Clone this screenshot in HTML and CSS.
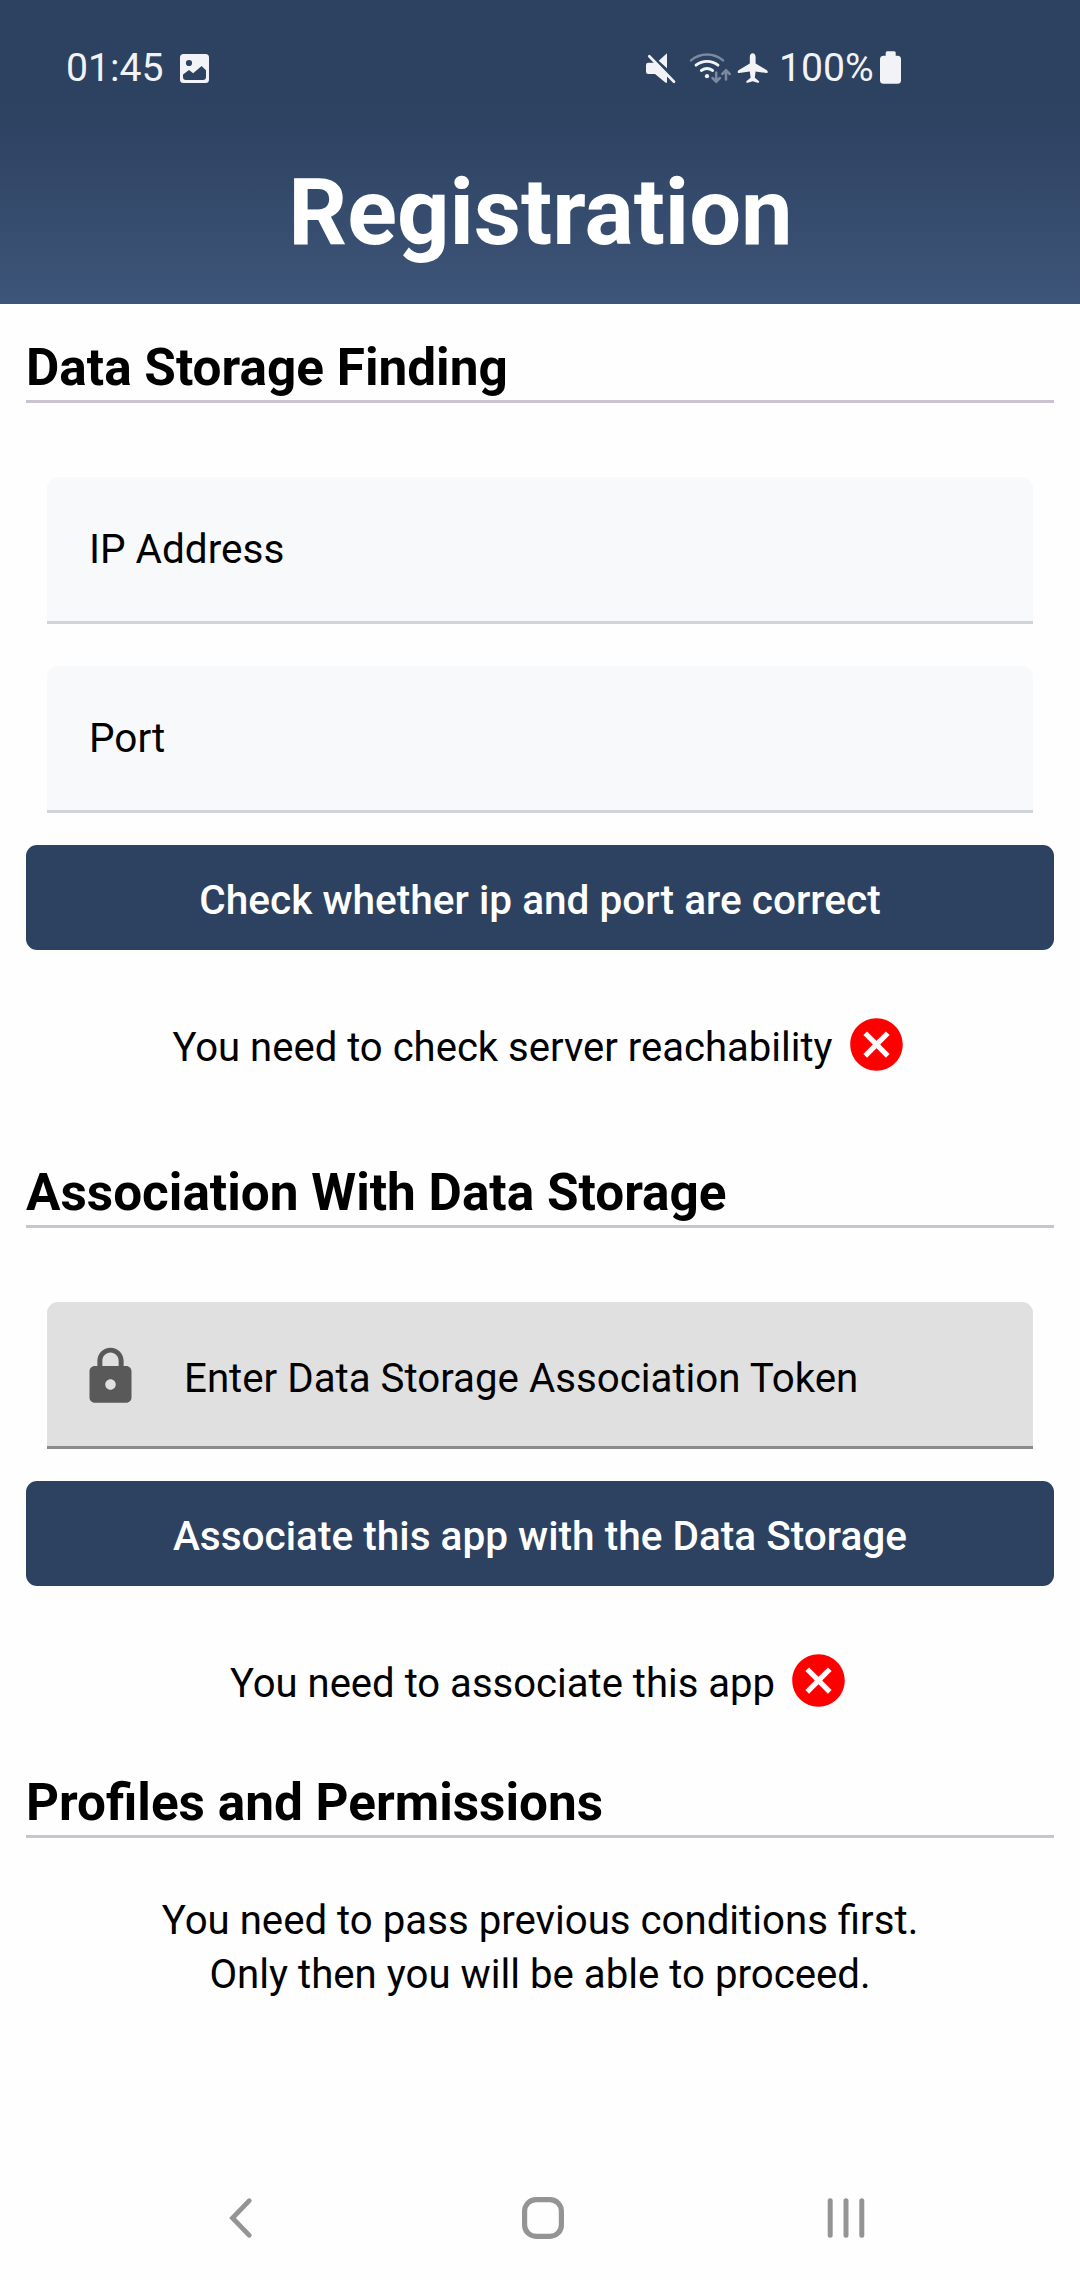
FILE: index.html
```html
<!DOCTYPE html>
<html lang="en">
<head>
<meta charset="utf-8">
<title>Registration</title>
<link rel="stylesheet" href="styles.css">
</head>
<body>
<header class="header">
  <div class="statusbar">
    <div class="status-left">
      <span>01:45</span>
      <svg width="29" height="29" viewBox="0 0 29 29"><rect width="29" height="29" rx="3.5" fill="#f1f3f6"/><circle cx="9" cy="9" r="3.1" fill="#2d4160"/><path d="M3 20.5L9 16l4.2 3.2 8.4-7.2 4.4 4.2V23q0 3-3 3H6q-3 0-3-3z" fill="#2d4160"/></svg>
    </div>
    <div class="status-right">
      <svg width="34" height="36" viewBox="0 0 34 36" fill="#f1f3f6"><path d="M23 3.3v15L14.7 10.7zM2 15q0-2.3 2.3-2.3H11l12 12v7.8q-.7.7-2-.3L11 24H4.300q-2.300 0-2.300-2.300z"/><path d="M5.300 6.300L30 31.700" stroke="#f1f3f6" stroke-width="2.700" stroke-linecap="round"/></svg>
      <svg class="wifi" width="46" height="36" viewBox="0 0 46 36" fill="none" stroke="#f1f3f6" stroke-width="2.800" stroke-linecap="round"><path d="M3 10.400a25 25 0 0 1 32 0M38 29.500v-9m-3.700 3.500l3.700-3.700 3.700 3.700M28.200 22.500v9m-3.700-3.500l3.700 3.700 3.700-3.700" stroke="#7c899e" stroke-width="2.500"/><path d="M8 15.200a17.500 17.500 0 0 1 22 0M13.300 20.500a10 10 0 0 1 11.400 0"/><circle cx="19" cy="26.200" r="2.100" fill="#f1f3f6" stroke="none"/></svg>
      <svg width="36" height="36" viewBox="0 0 36 36" fill="#f1f3f6"><path d="M17.700 3.300c-1.700 0-2.900 1.500-2.900 3.700v6.500L3.500 20.300c-1.300.9-1.100 3.200.7 2.700l10.600-1.600.8 6.300-4 3.200c-1 1 0 2.200 1.200 1.900l4.900-1.600 4.900 1.600c1.200.3 2.200-.9 1.200-1.900l-4-3.200.8-6.300L31.200 23c1.800.5 2-1.800.7-2.700L20.600 13.500V7c0-2.200-1.200-3.700-2.900-3.700z"/></svg>
      <span class="percent">100%</span>
      <svg width="21" height="36" viewBox="0 0 21 36" fill="#f1f3f6"><rect y="5.700" width="21" height="28" rx="3.500"/><rect x="5.700" y="1.300" width="10" height="8" rx="1.500"/></svg>
    </div>
  </div>
  <h1 class="title">Registration</h1>
</header>

<main class="content">
  <section class="section">
    <h2 class="heading">Data Storage Finding</h2>
    <div class="fields">
      <div class="field">IP Address</div>
      <div class="field">Port</div>
    </div>
    <button class="button">Check whether ip and port are correct</button>
    <div class="result">
      <span>You need to check server reachability</span>
      <svg width="63" height="63" viewBox="0 0 24 24" fill="#f00"><path d="M12 2C6.470 2 2 6.470 2 12s4.470 10 10 10 10-4.470 10-10S17.530 2 12 2zm5 13.590L15.590 17 12 13.410 8.410 17 7 15.590 10.590 12 7 8.410 8.410 7 12 10.590 15.590 7 17 8.410 13.410 12z"/></svg>
    </div>
  </section>

  <section class="section association">
    <h2 class="heading">Association With Data Storage</h2>
    <div class="fields">
      <div class="field disabled">
        <svg width="63" height="63" viewBox="0 0 24 24" fill="#595959"><path d="M18 8h-1V6c0-2.760-2.240-5-5-5S7 3.240 7 6v2H6c-1.100 0-2 .9-2 2v10c0 1.100.9 2 2 2h12c1.100 0 2-.9 2-2V10c0-1.100-.9-2-2-2zm-6 9c-1.100 0-2-.9-2-2s.9-2 2-2 2 .9 2 2-.9 2-2 2zm3.100-9H8.900V6c0-1.710 1.390-3.100 3.100-3.100s3.100 1.390 3.100 3.100z"/></svg>
        <span>Enter Data Storage Association Token</span>
      </div>
    </div>
    <button class="button">Associate this app with the Data Storage</button>
    <div class="result">
      <span>You need to associate this app</span>
      <svg width="63" height="63" viewBox="0 0 24 24" fill="#f00"><path d="M12 2C6.470 2 2 6.470 2 12s4.470 10 10 10 10-4.470 10-10S17.530 2 12 2zm5 13.590L15.590 17 12 13.410 8.410 17 7 15.590 10.590 12 7 8.410 8.410 7 12 10.590 15.590 7 17 8.410 13.410 12z"/></svg>
    </div>
  </section>

  <section class="section permissions">
    <h2 class="heading">Profiles and Permissions</h2>
    <p class="note">You need to pass previous conditions first.<br>Only then you will be able to proceed.</p>
  </section>
</main>

<nav class="navbar">
  <svg width="30" height="44" viewBox="0 0 30 44"><path d="M24.300 4.700L7.500 22l16.800 17.300" fill="none" stroke="#949494" stroke-width="4.800" stroke-linecap="round"/></svg>
  <svg class="home" width="42" height="42" viewBox="0 0 42 42"><rect x="2.600" y="2.600" width="36.800" height="36.800" rx="11.500" fill="none" stroke="#949494" stroke-width="5.200"/></svg>
  <svg width="38" height="40" viewBox="0 0 38 40"><path d="M3.200 2.700v34.600M19 2.700v34.600M34.800 2.700v34.600" stroke="#949494" stroke-width="5" stroke-linecap="round"/></svg>
</nav>
</body>
</html>
```
FILE: styles.css
```css
* { box-sizing: border-box; }

body {
  margin: 0;
  width: 1080px;
  height: 2280px;
  display: flex;
  flex-direction: column;
  background: #fefefe;
  color: #000;
  font: 40.2px/54px Roboto, "Noto Sans", sans-serif;
  overflow: hidden;
}

svg { display: block; flex: none; }

/* Header */
.header {
  height: 304px;
  background: linear-gradient(#2d4160 105px, #3d5579 304px);
  color: #fff;
}

.statusbar {
  display: flex;
  justify-content: space-between;
  height: 136px;
  padding: 0 179px 0 66px;
  color: #f1f3f6;
  font-size: 39.2px;
}

.status-left,
.status-right {
  display: flex;
  align-items: center;
  height: 136px;
}

.status-left { gap: 16px; }
.wifi { margin: 0 1px 0 10px; }
.percent { width: 109px; padding-left: 8px; }

.title {
  margin: 22px 0 0;
  padding-left: 1px;
  font-size: 92px;
  line-height: 110px;
  font-weight: 700;
  text-align: center;
}

/* Form */
.content {
  flex: 1;
  padding: 34px 26px 0;
}

.association { margin-top: 87px; }
.permissions { margin-top: 61px; }

.heading {
  margin: 0;
  padding-bottom: 2px;
  border-bottom: 3px solid #cac4d0;
  font-size: 51.3px;
  line-height: 60px;
  font-weight: 700;
}

.fields {
  display: flex;
  flex-direction: column;
  gap: 42px;
  padding: 74px 21px 32px;
}

.field {
  display: flex;
  align-items: center;
  height: 147px;
  padding: 0 42px;
  background: #f8f9fb;
  border-bottom: 3px solid #d0d4d9;
  border-radius: 11px 11px 0 0;
  font-size: 40.5px;
}

.disabled {
  gap: 42px;
  padding: 5px 32px 0;
  background: #e0e0e0;
  border-color: #8b8b8b;
  font-size: 40.25px;
}

.disabled span { padding-top: 4px; }

.button {
  display: block;
  width: 100%;
  height: 105px;
  padding: 5px 0 0;
  border: 0;
  border-radius: 11px;
  background: #2d4160;
  color: #fff;
  font: 500 40.55px/54px Roboto, "Noto Sans", sans-serif;
}

.result {
  display: flex;
  justify-content: center;
  align-items: center;
  gap: 12px;
  height: 63px;
  margin-top: 63px;
  font-size: 40.05px;
}

.result span { padding-top: 7px; }

.note {
  margin: 56px 0 0;
  text-align: center;
}

/* System navigation */
.navbar {
  display: flex;
  justify-content: space-between;
  align-items: center;
  height: 124px;
  padding: 0 215px 0 225px;
}

.home { margin-left: 4px; }
```
